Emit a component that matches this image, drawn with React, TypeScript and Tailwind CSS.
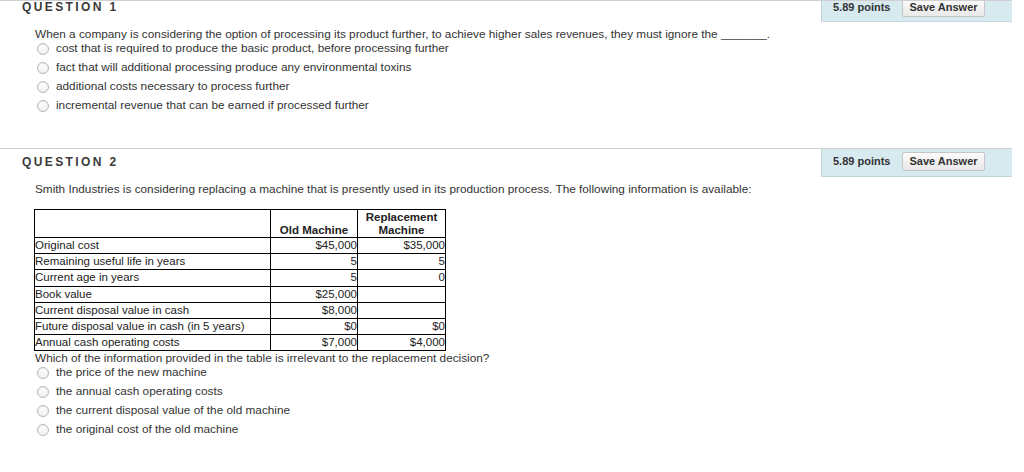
import React from "react";

type Fila = { label: string; viejo: string; nuevo: string };

const FILAS: Fila[] = [
  { label: "Original cost", viejo: "$45,000", nuevo: "$35,000" },
  { label: "Remaining useful life in years", viejo: "5", nuevo: "5" },
  { label: "Current age in years", viejo: "5", nuevo: "0" },
  { label: "Book value", viejo: "$25,000", nuevo: "" },
  { label: "Current disposal value in cash", viejo: "$8,000", nuevo: "" },
  { label: "Future disposal value in cash (in 5 years)", viejo: "$0", nuevo: "$0" },
  { label: "Annual cash operating costs", viejo: "$7,000", nuevo: "$4,000" },
];

const OPCIONES_1 = [
  "cost that is required to produce the basic product, before processing further",
  "fact that will additional processing produce any environmental toxins",
  "additional costs necessary to process further",
  "incremental revenue that can be earned if processed further",
];

const OPCIONES_2 = [
  "the price of the new machine",
  "the annual cash operating costs",
  "the current disposal value of the old machine",
  "the original cost of the old machine",
];

function Radio() {
  return (
    <span className="size-[12px] shrink-0 rounded-full border border-[#b8b8b8] bg-gradient-to-b from-white to-[#f0f0f0] shadow-[inset_0_1px_1px_rgba(0,0,0,0.08)]" />
  );
}

function Opciones({ items }: { items: string[] }) {
  return (
    <ul className="-mt-[2px]">
      {items.map((t) => (
        <li key={t} className="flex h-[19px] items-center gap-[7px] pl-[2px]">
          <Radio />
          <span>{t}</span>
        </li>
      ))}
    </ul>
  );
}

function Puntos({ corto }: { corto?: boolean }) {
  return (
    <div
      className={
        "flex w-[191px] items-start overflow-hidden border-b border-l border-b-[#c3d7dc] border-l-[#bfd3d9] bg-[#d6eaf0] pl-[11px] text-[11px] " +
        (corto ? "h-[21px]" : "h-[28px]")
      }
    >
      <span className={"font-bold leading-[13px] " + (corto ? "mt-0" : "mt-[6px]")}>
        5.89 points
      </span>
      <button
        className={
          "ml-[12px] h-[19px] rounded-[2px] border border-[#c6c6c6] bg-gradient-to-b from-[#fbfbfb] to-[#e9e9e9] px-[6px] font-bold leading-[17px] text-[#333] " +
          (corto ? "-mt-[3px]" : "mt-[3px]")
        }
      >
        Save Answer
      </button>
    </div>
  );
}

export default function App() {
  return (
    <div className="w-[1012px] bg-white font-['Liberation_Sans',Arial,sans-serif] text-[11.8px] text-[#333]">
      {/* Pregunta 1 */}
      <section>
        <div className="flex justify-between border-t border-[#cfcfcf]">
          <h2 className="pl-[22px] text-[12px] font-bold leading-[12px] tracking-[2.4px] text-[#3a3a3a]">
            QUESTION 1
          </h2>
          <Puntos corto />
        </div>
        <div className="mt-[5px] pl-[35px]">
          <p className="leading-[14px]">
            When a company is considering the option of processing its product further, to
            achieve higher sales revenues, they must ignore the _______.
          </p>
          <Opciones items={OPCIONES_1} />
        </div>
      </section>

      {/* Pregunta 2 */}
      <section className="mt-[33px]">
        <div className="flex justify-between border-t border-[#cfcfcf]">
          <h2 className="pt-[7px] pl-[22px] text-[12px] font-bold leading-[12px] tracking-[2.4px] text-[#3a3a3a]">
            QUESTION 2
          </h2>
          <Puntos />
        </div>
        <div className="mt-[5px] pl-[35px]">
          <p className="leading-[14px]">
            Smith Industries is considering replacing a machine that is presently used in its
            production process. The following information is available:
          </p>
          <table className="-ml-[1px] mt-[13px] border-collapse border border-black text-[11.5px] leading-[13px] text-[#222]">
            <thead>
              <tr className="h-[28px]">
                <th className="w-[236px] border border-black" />
                <th className="w-[87px] border border-black align-bottom font-bold">
                  Old Machine
                </th>
                <th className="w-[88px] border border-black align-bottom font-bold">
                  Replacement
                  <br />
                  Machine
                </th>
              </tr>
            </thead>
            <tbody>
              {FILAS.map((f) => (
                <tr key={f.label} className="h-[16.2px]">
                  <td className="border border-black p-0 text-left">{f.label}</td>
                  <td className="border border-black p-0 text-right">{f.viejo}</td>
                  <td className="border border-black p-0 text-right">{f.nuevo}</td>
                </tr>
              ))}
            </tbody>
          </table>
          <p className="leading-[14px]">
            Which of the information provided in the table is irrelevant to the replacement
            decision?
          </p>
          <Opciones items={OPCIONES_2} />
        </div>
      </section>
    </div>
  );
}
